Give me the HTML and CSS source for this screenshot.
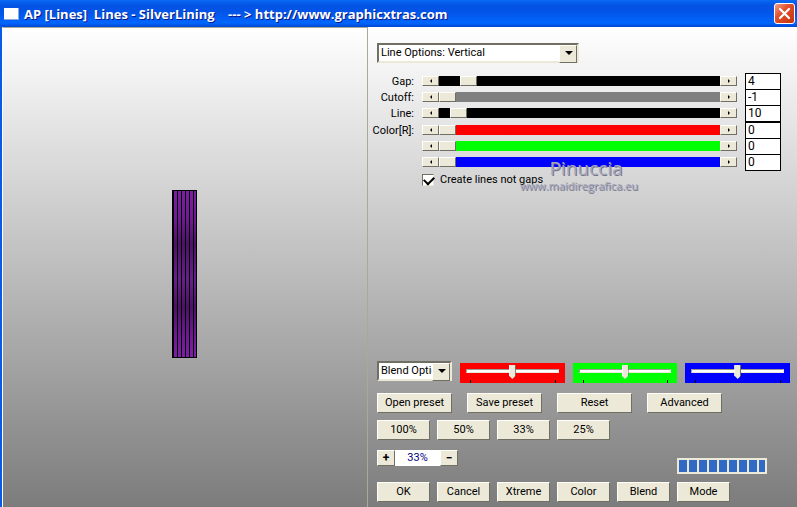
FILE: index.html
```html
<!DOCTYPE html>
<html lang="en">
<head>
  <meta charset="UTF-8" />
  <meta name="viewport" content="width=device-width, initial-scale=1.0"/>
  <title>AP [Lines] Lines - SilverLining</title>
  <link rel="stylesheet" href="styles.css">
</head>
<body>

  <header class="titlebar">
    <span class="app-icon"></span>
    <h1>AP [Lines]&nbsp; Lines - SilverLining &nbsp;&nbsp; --- &gt; http://www.graphicxtras.com</h1>
    <button class="close" aria-label="Close">
      <svg width="21" height="21" viewBox="0 0 21 21">
        <path d="M6 6l9 9M15 6l-9 9" stroke="#fff" stroke-width="2.2" stroke-linecap="round"/>
      </svg>
    </button>
  </header>

  <main class="window">
    <section class="preview">
      <svg width="25" height="168" viewBox="0 0 25 168">
        <defs>
          <linearGradient id="purple" x1="0" y1="0" x2="0" y2="1">
            <stop offset="0" stop-color="#7b1fa2"/>
            <stop offset="0.17" stop-color="#6f1a93"/>
            <stop offset="0.32" stop-color="#4c1266"/>
            <stop offset="0.44" stop-color="#5c1a7c"/>
            <stop offset="0.53" stop-color="#67208a"/>
            <stop offset="0.7" stop-color="#4c1266"/>
            <stop offset="0.86" stop-color="#6c1990"/>
            <stop offset="1" stop-color="#7d20a4"/>
          </linearGradient>
        </defs>
        <rect width="25" height="168" fill="#000"/>
        <path fill="url(#purple)" d="M2 1h3v166H2zM6 1h3v166H6zM10 1h3v166h-3zM14 1h3v166h-3zM18 1h3v166h-3zM22 1h2v166h-2z"/>
      </svg>
    </section>

    <section class="panel">
      <div class="select line-options">
        <select aria-label="Line options">
          <option>Line Options: Vertical</option>
        </select>
      </div>

      <div class="rows">
        <div class="row">
          <label for="gap">Gap:</label>
          <div class="scroll black">
            <button aria-label="Decrease gap"><i class="left"></i></button>
            <input type="range" id="gap" min="0" max="100" value="8">
            <button aria-label="Increase gap"><i class="right"></i></button>
          </div>
          <input type="text" class="value" aria-label="Gap value" value="4">
        </div>
        <div class="row">
          <label for="cutoff">Cutoff:</label>
          <div class="scroll gray">
            <button aria-label="Decrease cutoff"><i class="left"></i></button>
            <input type="range" id="cutoff" min="0" max="100" value="0">
            <button aria-label="Increase cutoff"><i class="right"></i></button>
          </div>
          <input type="text" class="value" aria-label="Cutoff value" value="-1">
        </div>
        <div class="row">
          <label for="line">Line:</label>
          <div class="scroll black">
            <button aria-label="Decrease line"><i class="left"></i></button>
            <input type="range" id="line" min="0" max="100" value="4">
            <button aria-label="Increase line"><i class="right"></i></button>
          </div>
          <input type="text" class="value" aria-label="Line value" value="10">
        </div>
      </div>

      <div class="rows">
        <div class="row">
          <label for="red">Color[R]:</label>
          <div class="scroll red">
            <button aria-label="Decrease red"><i class="left"></i></button>
            <input type="range" id="red" min="0" max="255" value="0">
            <button aria-label="Increase red"><i class="right"></i></button>
          </div>
          <input type="text" class="value" aria-label="Red value" value="0">
        </div>
        <div class="row">
          <label for="green"></label>
          <div class="scroll green">
            <button aria-label="Decrease green"><i class="left"></i></button>
            <input type="range" id="green" aria-label="Green" min="0" max="255" value="0">
            <button aria-label="Increase green"><i class="right"></i></button>
          </div>
          <input type="text" class="value" aria-label="Green value" value="0">
        </div>
        <div class="row">
          <label for="blue"></label>
          <div class="scroll blue">
            <button aria-label="Decrease blue"><i class="left"></i></button>
            <input type="range" id="blue" aria-label="Blue" min="0" max="255" value="0">
            <button aria-label="Increase blue"><i class="right"></i></button>
          </div>
          <input type="text" class="value" aria-label="Blue value" value="0">
        </div>
      </div>

      <div class="check-row">
        <input type="checkbox" id="create" checked>
        <label for="create">Create lines not gaps</label>
        <div class="watermark">
          <span class="mark-name">Pinuccia</span>
          <span class="mark-site">www.maidiregrafica.eu</span>
        </div>
      </div>

      <div class="blend-row">
        <div class="select blend-options">
          <select aria-label="Blend options">
            <option>Blend Options</option>
          </select>
        </div>
        <input type="range" class="trackbar red" aria-label="Red blend" value="50">
        <input type="range" class="trackbar green" aria-label="Green blend" value="50">
        <input type="range" class="trackbar blue" aria-label="Blue blend" value="50">
      </div>

      <div class="buttons presets">
        <button>Open preset</button>
        <button>Save preset</button>
        <button>Reset</button>
        <button>Advanced</button>
      </div>

      <div class="buttons">
        <button>100%</button>
        <button>50%</button>
        <button>33%</button>
        <button>25%</button>
      </div>

      <div class="zoom-row">
        <div class="zoom">
          <button aria-label="Zoom in">+</button>
          <output>33%</output>
          <button aria-label="Zoom out">−</button>
        </div>
        <progress aria-label="Progress" value="100" max="100"></progress>
      </div>

      <div class="buttons">
        <button>OK</button>
        <button>Cancel</button>
        <button>Xtreme</button>
        <button>Color</button>
        <button>Blend</button>
        <button>Mode</button>
      </div>
    </section>
  </main>

</body>
</html>
```
FILE: styles.css
```css
:root {
  --face: #ece9d8;
  --light: #fffef8;
  --shadow: #716f64;
}

* {
  box-sizing: border-box;
}

body {
  margin: 0;
  min-height: 100vh;
  display: flex;
  flex-direction: column;
  font-family: Roboto, "Liberation Sans", sans-serif;
  font-size: 11px;
  line-height: 16px;
  color: #000;
}

button,
input,
select {
  margin: 0;
  padding: 0;
  border: 0;
  border-radius: 0;
  font: inherit;
  color: inherit;
}

button {
  background: var(--face);
  border: 1px solid;
  border-color: var(--light) var(--shadow) var(--shadow) var(--light);
}

/* title bar */
.titlebar {
  display: flex;
  align-items: center;
  height: 27px;
  padding: 0 2px 0 4px;
  background: linear-gradient(#0a6af5, #0353e3 20%, #0355e8 45%, #0066ff 85%, #0048d0);
}

.app-icon {
  width: 15px;
  height: 12px;
  background: #fff;
  border-right: 1px solid #8ca8d8;
  border-bottom: 1px solid #8ca8d8;
}

.titlebar h1 {
  flex: 1;
  margin: 0 0 0 5px;
  font-family: "Open Sans", sans-serif;
  font-size: 13px;
  font-weight: bold;
  line-height: 20px;
  color: #fff;
  text-shadow: 1px 1px #0a1883;
  white-space: nowrap;
}

.close {
  display: flex;
  width: 21px;
  height: 21px;
  border: 1px solid #fff;
  border-radius: 3px;
  background: linear-gradient(135deg, #f0a08c, #e2502c 40%, #c5330c);
}

.close svg {
  flex: none;
  margin: -1px;
}

/* window body */
.window {
  flex: 1;
  display: grid;
  grid-template-columns: 366fr 429fr;
  border-left: 2px solid #0a5ae8;
  background: linear-gradient(#fff, #7c7c7c);
}

.preview {
  display: flex;
  align-items: center;
  justify-content: center;
  padding: 12px 1px 0 0;
  border: 1px solid #aca899;
  border-width: 1px 1px 0;
  border-left-color: #fff;
}

.panel {
  min-width: 0;
  display: flex;
  flex-direction: column;
  padding: 16px 7px 5px 9px;
}

/* drop-downs */
.select {
  position: relative;
  flex: none;
  height: 20px;
  border: 2px solid;
  border-color: var(--shadow) var(--face) var(--face) var(--shadow);
}

.select select {
  display: block;
  width: 100%;
  height: 100%;
  padding: 0 17px 0 2px;
  appearance: none;
  background: #fff;
}

.select::before {
  content: "";
  position: absolute;
  top: 0;
  right: 0;
  width: 16px;
  height: 16px;
  background: var(--face);
  border: 1px solid;
  border-color: var(--light) var(--shadow) var(--shadow) var(--light);
  pointer-events: none;
}

.select::after {
  content: "";
  position: absolute;
  top: 6px;
  right: 4px;
  border: 4px solid transparent;
  border-top-color: #000;
  border-bottom: 0;
  pointer-events: none;
}

.line-options {
  width: 202px;
  margin-bottom: 10px;
}

.blend-options {
  width: 75px;
}

/* parameter rows */
.rows {
  margin: 0 9px 1px 0;
}

.row {
  display: grid;
  grid-template-columns: 37px 1fr 36px;
  column-gap: 8px;
  align-items: center;
  height: 16px;
}

.row label {
  justify-self: end;
  white-space: nowrap;
}

.scroll {
  display: flex;
  align-self: start;
  height: 10px;
  margin-top: 3px;
}

.scroll button {
  display: flex;
  align-items: center;
  justify-content: center;
  width: 17px;
}

.scroll i {
  border: 2px solid transparent;
}

.scroll .left {
  border-right-color: #000;
  border-left: 0;
}

.scroll .right {
  border-left-color: #000;
  border-right: 0;
}

.scroll input {
  flex: 1;
  min-width: 0;
  height: 10px;
  appearance: none;
  background: var(--track);
}

.scroll input::-webkit-slider-thumb {
  appearance: none;
  width: 17px;
  height: 10px;
  background: var(--face);
  border: 1px solid;
  border-color: var(--light) var(--shadow) var(--shadow) var(--light);
}

.black { --track: #000; }
.gray { --track: #808080; }
.red { --track: #f00; }
.green { --track: #0f0; }
.blue { --track: #00f; }

.value {
  align-self: start;
  width: 100%;
  height: 17px;
  padding: 0 2px 2px;
  border: 1px solid #000;
  background: #fff;
  font-size: 12px;
}

/* checkbox */
.check-row {
  position: relative;
  display: flex;
  align-items: center;
  gap: 6px;
  margin: 1px 0 auto 45px;
}

.check-row input {
  width: 12px;
  height: 12px;
  appearance: none;
  background: #fff;
  border: 1px solid;
  border-color: var(--shadow) var(--face) var(--face) var(--shadow);
}

.check-row input:checked::before {
  content: "";
  display: block;
  width: 8px;
  height: 5px;
  margin: 1px;
  border: 2px solid #000;
  border-width: 0 0 2px 2px;
  transform: rotate(-45deg);
}

.watermark {
  position: absolute;
  top: -14px;
  left: 98px;
  display: flex;
  flex-direction: column;
  align-items: center;
  color: #a6a6be;
  text-shadow: 1px 1px #77778a;
  font-family: "Open Sans", sans-serif;
  pointer-events: none;
}

.mark-name {
  padding-left: 14px;
  font-size: 19px;
  line-height: 20px;
}

.mark-site {
  font-size: 11px;
  line-height: 16px;
}

/* blend sliders */
.blend-row {
  display: flex;
  align-items: flex-end;
  gap: 8px;
  margin-bottom: 10px;
}

.blend-row .select {
  margin-bottom: 2px;
}

.trackbar {
  flex: 1;
  min-width: 0;
  height: 20px;
  padding: 0 6px;
  appearance: none;
  background:
    linear-gradient(#000, #000) 10px 100% / 1px 3px no-repeat,
    linear-gradient(#000, #000) right 9px bottom / 1px 3px no-repeat,
    var(--track);
}

.trackbar::-webkit-slider-runnable-track {
  height: 4px;
  margin-bottom: 4px;
  background: #fff;
  border: 1px solid;
  border-color: #9d9c90 var(--face) var(--face) #9d9c90;
}

.trackbar::-webkit-slider-thumb {
  appearance: none;
  width: 7px;
  height: 14px;
  margin-top: -5px;
  background: linear-gradient(90deg, var(--light) 1px, var(--face) 1px 6px, var(--shadow) 6px);
  clip-path: polygon(0 0, 100% 0, 100% 75%, 50% 100%, 0 75%);
}

/* push buttons */
.buttons {
  display: flex;
  gap: 7px;
}

.buttons button {
  width: 53px;
  height: 20px;
  white-space: nowrap;
}

.presets {
  gap: 15px;
  margin-bottom: 7px;
}

.buttons.presets button {
  width: 75px;
}

.zoom-row {
  display: flex;
  align-items: flex-start;
  justify-content: space-between;
  margin: 9px 23px 8px 0;
}

.zoom {
  display: flex;
  margin-top: 1px;
}

.zoom button {
  width: 18px;
  height: 16px;
  font-size: 12px;
  line-height: 12px;
  font-weight: bold;
}

.zoom output {
  width: 45px;
  background: #fff;
  color: #000080;
  text-align: center;
}

progress {
  width: 90px;
  height: 16px;
  margin-top: 9px;
  padding: 1px;
  appearance: none;
  border: 1px solid var(--face);
  background: var(--face);
}

progress::-webkit-progress-bar {
  background: var(--face);
}

progress::-webkit-progress-value {
  background: repeating-linear-gradient(90deg, #316ac5 0 8px, var(--face) 8px 10px);
}
```
